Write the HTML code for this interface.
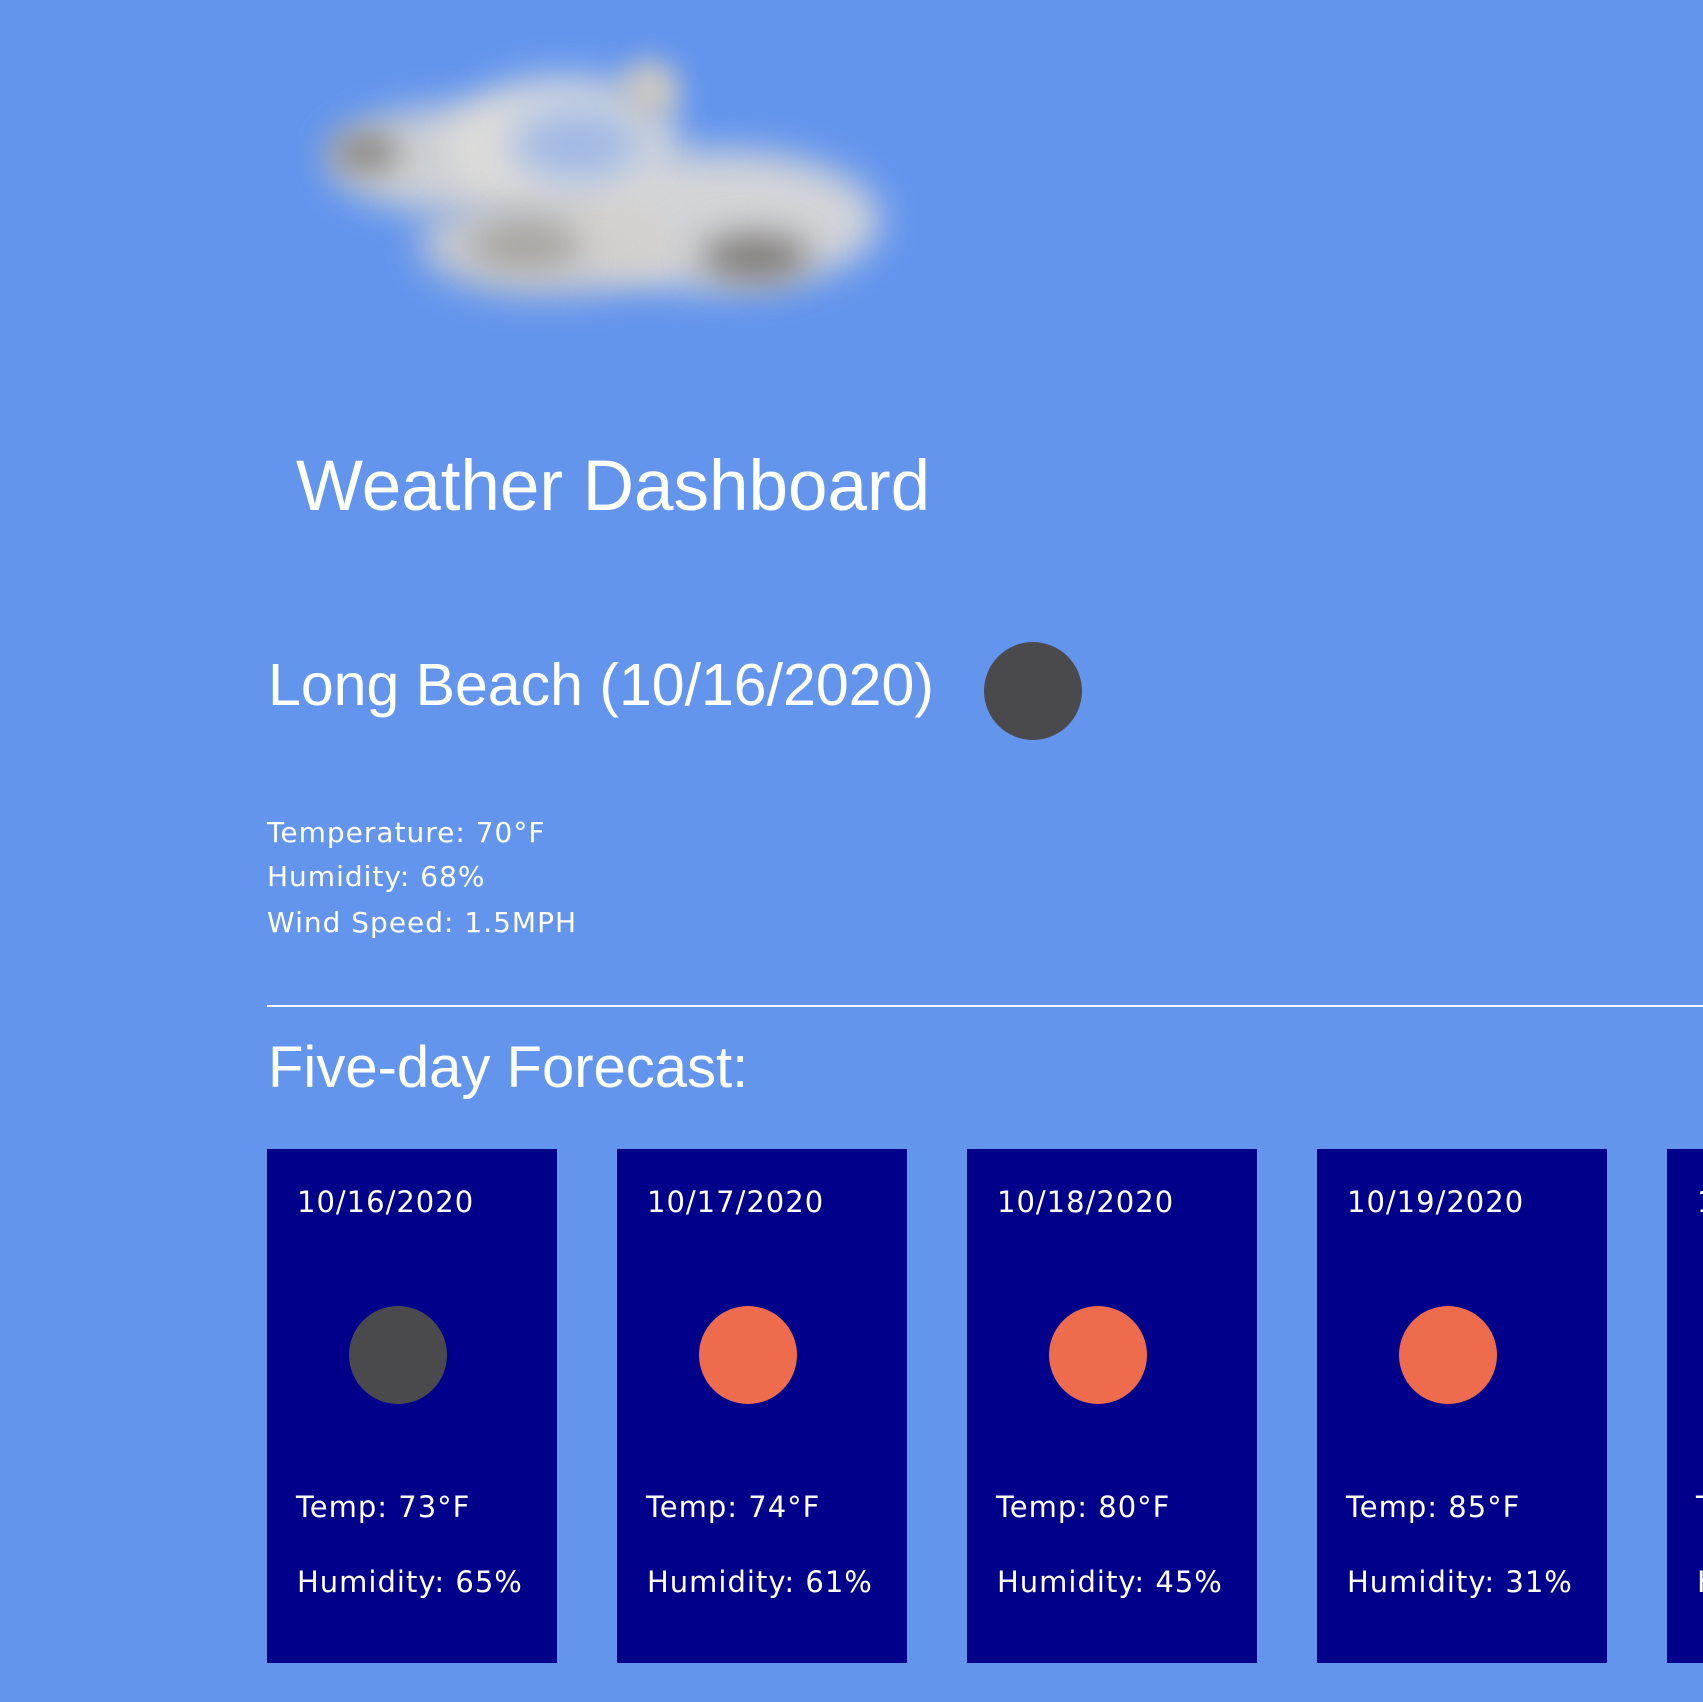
<!DOCTYPE html>
<html><head><meta charset="utf-8"><style>
html,body{margin:0;padding:0}
body{width:1703px;height:1702px;background:#6495ED;position:relative;overflow:hidden;font-family:"DejaVu Sans","Liberation Sans",sans-serif;color:#fff}
.a{position:absolute;white-space:nowrap}
.s{letter-spacing:1px}
.t{font-family:"Liberation Sans",sans-serif}
.cloud{position:absolute;border-radius:50%;filter:blur(18px)}
.card{position:absolute;top:1149px;width:290px;height:514px;background:#00008B}
.circ{position:absolute;width:98px;height:98px;border-radius:50%}
</style></head><body>
<div class="cloud" style="left:330px;top:105px;width:280px;height:110px;background:#d8d6d2;opacity:.9"></div>
<div class="cloud" style="left:450px;top:75px;width:230px;height:140px;background:#e2e0dc;opacity:.85"></div>
<div class="cloud" style="left:560px;top:150px;width:320px;height:140px;background:#dedbd6;opacity:.9"></div>
<div class="cloud" style="left:420px;top:195px;width:260px;height:100px;background:#d3d0cc;opacity:.9"></div>
<div class="cloud" style="left:510px;top:110px;width:130px;height:70px;background:#9fb8e6;filter:blur(20px)"></div>
<div class="cloud" style="left:470px;top:220px;width:110px;height:50px;background:#a9a6a2;filter:blur(16px)"></div>
<div class="cloud" style="left:700px;top:235px;width:110px;height:45px;background:#7a7672;filter:blur(18px)"></div>
<div class="cloud" style="left:330px;top:130px;width:70px;height:45px;background:#8f8c89;filter:blur(16px)"></div>
<div class="cloud" style="left:620px;top:60px;width:60px;height:60px;background:#c9c7c3;filter:blur(14px)"></div>

<div class="a t" style="left:296px;top:442px;font-size:71px;line-height:90px">Weather Dashboard</div>
<div class="a t" style="left:268px;top:647px;font-size:59px;line-height:76px">Long Beach (10/16/2020)</div>
<div class="circ" style="left:984px;top:642px;background:#4a4a4d"></div>
<div class="a s" style="left:267px;top:815px;font-size:28px;line-height:36px">Temperature: 70°F</div>
<div class="a s" style="left:267px;top:859px;font-size:28px;line-height:36px">Humidity: 68%</div>
<div class="a s" style="left:267px;top:905px;font-size:28px;line-height:36px">Wind Speed: 1.5MPH</div>
<div class="a" style="left:267px;top:1005px;width:1436px;height:2px;background:#fff"></div>
<div class="a t" style="left:268px;top:1030px;font-size:58px;line-height:76px">Five-day Forecast:</div>

<div class="card" style="left:267px"></div>
<div class="card" style="left:617px"></div>
<div class="card" style="left:967px"></div>
<div class="card" style="left:1317px"></div>
<div class="card" style="left:1667px"></div>

<div class="a s" style="left:297px;top:1184px;font-size:29px;line-height:36px">10/16/2020</div>
<div class="a s" style="left:647px;top:1184px;font-size:29px;line-height:36px">10/17/2020</div>
<div class="a s" style="left:997px;top:1184px;font-size:29px;line-height:36px">10/18/2020</div>
<div class="a s" style="left:1347px;top:1184px;font-size:29px;line-height:36px">10/19/2020</div>
<div class="a s" style="left:1697px;top:1184px;font-size:29px;line-height:36px">10/20/2020</div>

<div class="circ" style="left:349px;top:1306px;background:#4a4a4d"></div>
<div class="circ" style="left:699px;top:1306px;background:#EE6B4D"></div>
<div class="circ" style="left:1049px;top:1306px;background:#EE6B4D"></div>
<div class="circ" style="left:1399px;top:1306px;background:#EE6B4D"></div>

<div class="a s" style="left:296px;top:1489px;font-size:29px;line-height:36px">Temp: 73°F</div>
<div class="a s" style="left:646px;top:1489px;font-size:29px;line-height:36px">Temp: 74°F</div>
<div class="a s" style="left:996px;top:1489px;font-size:29px;line-height:36px">Temp: 80°F</div>
<div class="a s" style="left:1346px;top:1489px;font-size:29px;line-height:36px">Temp: 85°F</div>
<div class="a s" style="left:1696px;top:1489px;font-size:29px;line-height:36px">Temp: 86°F</div>
<div class="a s" style="left:297px;top:1564px;font-size:29px;line-height:36px">Humidity: 65%</div>
<div class="a s" style="left:647px;top:1564px;font-size:29px;line-height:36px">Humidity: 61%</div>
<div class="a s" style="left:997px;top:1564px;font-size:29px;line-height:36px">Humidity: 45%</div>
<div class="a s" style="left:1347px;top:1564px;font-size:29px;line-height:36px">Humidity: 31%</div>
<div class="a s" style="left:1697px;top:1564px;font-size:29px;line-height:36px">Humidity: 30%</div>
</body></html>
